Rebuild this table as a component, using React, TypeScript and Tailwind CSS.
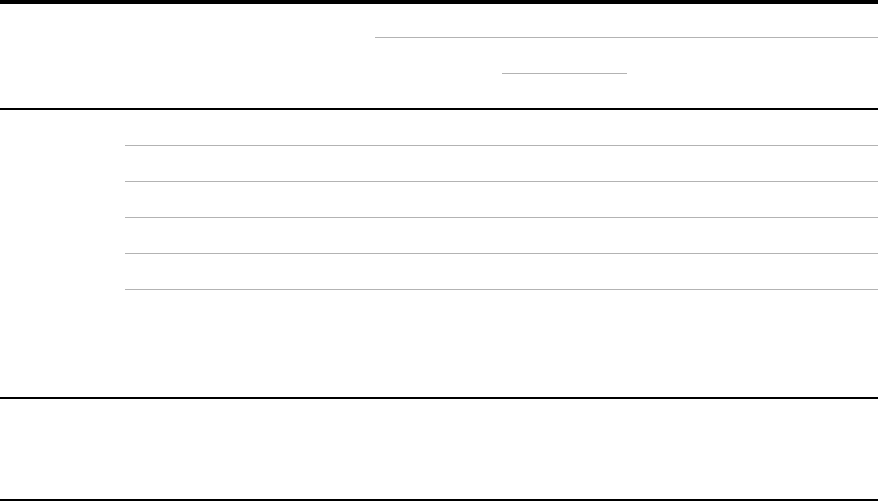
import React from "react";

const Gray = ({ ml }: { ml: string }) => (
  <div className={`h-px bg-[#b3b3b3] ${ml}`} />
);

export default function App() {
  return (
    <div className="w-[878px] h-[501px] bg-white flex flex-col font-['Liberation_Serif',serif] overflow-hidden">
      {/* header */}
      <div className="h-[4px] bg-black shrink-0" />
      <div className="h-[33px] shrink-0" />
      <div className="flex shrink-0">
        <div className="w-[375px] shrink-0" />
        <div className="flex-1 h-px bg-[#b3b3b3]" />
      </div>
      <div className="h-[35px] shrink-0" />
      <div className="flex shrink-0">
        <div className="w-[502px] shrink-0" />
        <div className="w-[125px] h-px bg-[#b3b3b3]" />
      </div>
      <div className="h-[34px] shrink-0" />
      <div className="h-[2px] bg-black shrink-0" />
      {/* body */}
      <div className="h-[35px] shrink-0" />
      <Gray ml="ml-[125px]" />
      <div className="h-[35px] shrink-0" />
      <Gray ml="ml-[125px]" />
      <div className="h-[35px] shrink-0" />
      <Gray ml="ml-[125px]" />
      <div className="h-[35px] shrink-0" />
      <Gray ml="ml-[125px]" />
      <div className="h-[35px] shrink-0" />
      <Gray ml="ml-[125px]" />
      <div className="h-[107px] shrink-0" />
      <div className="h-[2px] bg-black shrink-0" />
      <div className="h-[100px] shrink-0" />
      <div className="h-[2px] bg-black shrink-0" />
    </div>
  );
}
